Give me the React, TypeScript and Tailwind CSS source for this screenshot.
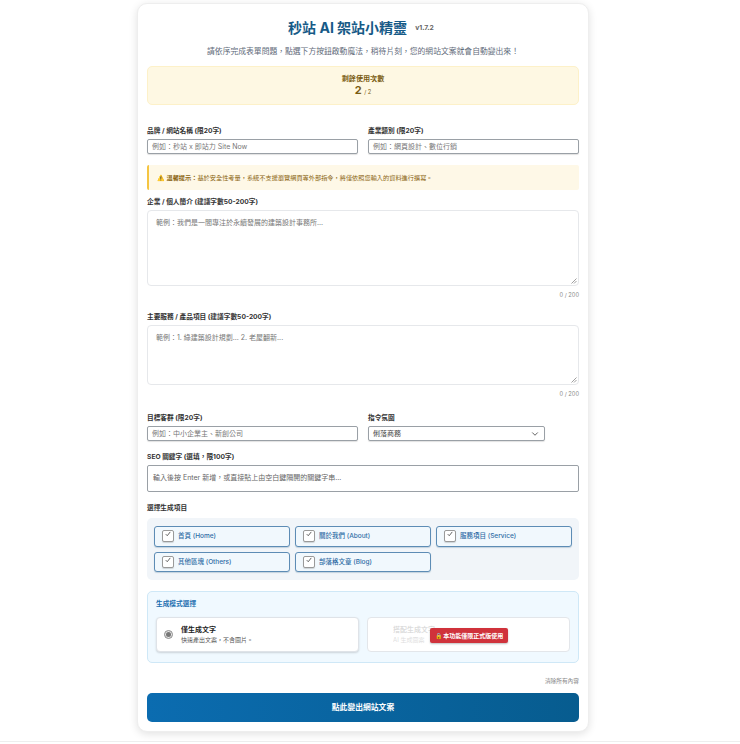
import { ChevronDown } from 'lucide-react'

const FONT = '[font-family:Inter,"Noto_Sans_CJK_TC",sans-serif]'

const labelClass = 'block text-[6.7px] leading-[12px] font-bold text-[#333333]'
const inputClass =
  'block w-full h-[15px] rounded-[2px] border border-[#9aa0a6] bg-white px-[4px] text-[7px] leading-[13px] text-[#777777] shadow-[0_1px_1px_rgba(0,0,0,0.12)] flex items-center'

function Field({ label, placeholder }: { label: string; placeholder: string }) {
  return (
    <div>
      <div className={labelClass}>{label}</div>
      <div className={`${inputClass} mt-[2px]`}>{placeholder}</div>
    </div>
  )
}

function TextBox({ label, placeholder, height, mt }: { label: string; placeholder: string; height: string; mt: string }) {
  return (
    <div className={mt}>
      <div className={labelClass}>{label}</div>
      <div className={`relative mt-[2px] rounded-[4px] border border-[#e6e8eb] bg-white px-[8px] py-[6px] text-[7px] leading-[12px] text-[#777777] ${height}`}>
        {placeholder}
        <svg className="absolute right-[1px] bottom-[1px] w-[6px] h-[6px]" viewBox="0 0 6 6" fill="none" stroke="#777777" strokeWidth="0.7">
          <path d="M0.5 5.5L5.5 0.5M3 5.5L5.5 3" />
        </svg>
      </div>
      <div className="mt-[4px] text-right text-[5.7px] leading-[10px] text-[#888888]">0 / 200</div>
    </div>
  )
}

function Check({ label }: { label: string }) {
  return (
    <div className="flex h-[20.5px] items-center rounded-[3px] border border-[#5d8cb5] bg-[#f1f8fd] pl-[7px] shadow-[0_1px_1px_rgba(15,76,117,0.2)]">
      <span className="relative h-[12px] w-[12px] rounded-[2px] border border-[#9a9a9a] bg-white shadow-[0_1px_1px_rgba(0,0,0,0.15)]">
        <svg className="absolute left-[1.5px] top-0 w-[6px] h-[6px]" viewBox="0 0 8 8" fill="none" stroke="#555555" strokeWidth="1.2">
          <path d="M1 4.2L3 6.3L7 1.2" />
        </svg>
      </span>
      <span className="ml-[4px] pt-[2px] text-[6.5px] font-medium text-[#2f6ca5]">{label}</span>
    </div>
  )
}

export default function App() {
  return (
    <div className={`${FONT} h-[744px] overflow-hidden bg-white`}>
      <div className="h-[742px] border-b border-[#eeeeee]">
        <div className="ml-[137px] w-[452px] pt-[3px]">
          <div className="h-[729px] rounded-[10px] border border-[#eeeeee] bg-white px-[9px] pt-[15px] shadow-[0_2px_8px_rgba(0,0,0,0.12)]">
            {/* Header */}
            <div className="flex items-center justify-center pr-[4px]">
              <h1 className="text-[14px] leading-[18px] font-bold text-[#165a87]">秒站 AI 架站小精靈</h1>
              <span className="ml-[8px] text-[6.8px] font-bold text-[#666666]">v1.7.2</span>
            </div>
            <p className="mt-[8px] text-center text-[7.8px] leading-[13px] text-[#5f6b7a]">
              請依序完成表單問題，點選下方按鈕啟動魔法，稍待片刻，您的網站文案就會自動變出來！
            </p>

            {/* Usage */}
            <div className="mt-[8px] h-[39px] rounded-[5px] border border-[#fdf1c9] bg-[#fef8e3] pt-[6px] text-center">
              <div className="text-[7.1px] leading-[11px] font-bold text-[#7a5c12]">剩餘使用次數</div>
              <div className="text-[11px] leading-[13px] font-bold text-[#7a5c12]">
                2 <span className="text-[5.7px] font-normal">/ 2</span>
              </div>
            </div>

            {/* Brand + industry */}
            <div className="mt-[20px] grid grid-cols-2 gap-[10px]">
              <Field label="品牌 / 網站名稱 (限20字)" placeholder="例如：秒站 x 即站力 Site Now" />
              <Field label="產業類別 (限20字)" placeholder="例如：網頁設計、數位行銷" />
            </div>

            {/* Notice */}
            <div className="mt-[11px] flex h-[25px] items-center rounded-[2px] border-l-2 border-[#f5c542] bg-[#fef8e7] pl-[8px] text-[6.2px] text-[#8a6410]">
              <span className="font-bold">⚠️ 溫馨提示：</span>基於安全性考量，系統不支援瀏覽網頁等外部指令，將僅依照您輸入的資料進行撰寫。
            </div>

            <TextBox mt="mt-[6px]" label="企業 / 個人簡介 (建議字數50-200字)" placeholder="範例：我們是一間專注於永續發展的建築設計事務所..." height="h-[76px]" />
            <TextBox mt="mt-[11px]" label="主要服務 / 產品項目 (建議字數50-200字)" placeholder="範例：1. 綠建築設計規劃... 2. 老屋翻新..." height="h-[60px]" />

            {/* Audience + tone */}
            <div className="mt-[13px] grid grid-cols-2 gap-[10px]">
              <Field label="目標客群 (限20字)" placeholder="例如：中小企業主、新創公司" />
              <div>
                <div className={labelClass}>指令氛圍</div>
                <div className={`${inputClass} mt-[2px] !w-[177px] justify-between !text-[#444444]`}>
                  俐落商務
                  <ChevronDown className="h-[10px] w-[10px] text-[#444444]" strokeWidth={2} />
                </div>
              </div>
            </div>

            {/* SEO */}
            <div className="mt-[10px]">
              <div className={labelClass}>SEO 關鍵字 (選填，限100字)</div>
              <div className="mt-[2px] flex h-[27px] items-center rounded-[2px] border border-[#9aa0a6] bg-white px-[5px] text-[7px] text-[#666666]">
                輸入後按 Enter 新增，或直接貼上由空白鍵隔開的關鍵字串...
              </div>
            </div>

            {/* Sections */}
            <div className="mt-[10px]">
              <div className={labelClass}>選擇生成項目</div>
              <div className="mt-[4px] grid h-[62px] grid-cols-3 gap-x-[5px] gap-y-[5px] rounded-[5px] bg-[#f1f5f9] px-[7px] py-[8px]">
                <Check label="首頁 (Home)" />
                <Check label="關於我們 (About)" />
                <Check label="服務項目 (Service)" />
                <Check label="其他區塊 (Others)" />
                <Check label="部落格文章 (Blog)" />
              </div>
            </div>

            {/* Mode */}
            <div className="mt-[11px] h-[72px] rounded-[5px] border border-[#cfe8f7] bg-[#f0f9ff] px-[8px] pt-[7px]">
              <div className="text-[6.7px] leading-[11px] font-bold text-[#1d6fb0]">生成模式選擇</div>
              <div className="mt-[7px] grid grid-cols-2 gap-[8px]">
                <div className="flex h-[35px] items-center rounded-[4px] border border-[#dfe3e8] bg-white pl-[7px] shadow-[0_1px_2px_rgba(0,0,0,0.15)]">
                  <span className="flex h-[9px] w-[9px] items-center justify-center rounded-full border border-[#8d8d8d] bg-[#e5e5e5]">
                    <span className="h-[5px] w-[5px] rounded-full bg-[#777777]" />
                  </span>
                  <div className="ml-[8px]">
                    <div className="text-[7px] leading-[11px] font-bold text-[#222222]">僅生成文字</div>
                    <div className="text-[6px] leading-[10px] text-[#555555]">快速產出文案，不含圖片。</div>
                  </div>
                </div>
                <div className="relative h-[35px] rounded-[4px] border border-[#e3e6ea] bg-white pl-[25px] pt-[6px]">
                  <div className="opacity-20">
                    <div className="text-[7px] leading-[11px] font-bold text-[#555555]">搭配生成文字</div>
                    <div className="text-[6px] leading-[10px] text-[#555555]">AI 生成圖案</div>
                  </div>
                  <div className="absolute left-[62px] top-[10px] flex h-[15px] w-[78px] items-center justify-center rounded-[2px] bg-[#d0323b] text-[6px] font-bold text-white shadow-[0_1px_2px_rgba(0,0,0,0.25)]">
                    🔒 本功能僅限正式版使用
                  </div>
                </div>
              </div>
            </div>

            {/* Footer */}
            <div className="mt-[13px] text-right text-[5.7px] leading-[10px] text-[#888888]">清除所有內容</div>
            <div className="mt-[7px] flex h-[29px] items-center justify-center rounded-[5px] bg-gradient-to-r from-[#0b6cb0] to-[#075c8f] text-[7.8px] font-bold text-white">
              點此變出網站文案
            </div>
          </div>
        </div>
      </div>
    </div>
  )
}
